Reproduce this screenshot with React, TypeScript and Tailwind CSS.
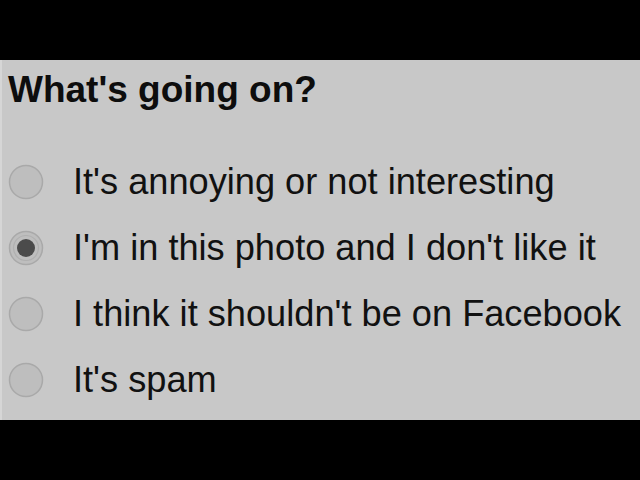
import React from "react";

const options = [
  { label: "It's annoying or not interesting", checked: false },
  { label: "I'm in this photo and I don't like it", checked: true },
  { label: "I think it shouldn't be on Facebook", checked: false },
  { label: "It's spam", checked: false },
];

function Radio({ checked }: { checked: boolean }) {
  return (
    <svg width="36" height="36" viewBox="0 0 36 36" className="shrink-0">
      <circle cx="18" cy="18" r="16.5" fill="#bebebe" stroke="#a9a9a9" strokeWidth="1.5" />
      {checked && (
        <>
          <circle cx="18" cy="18" r="12.5" fill="none" stroke="#b0b0b0" strokeWidth="1.2" />
          <circle cx="18" cy="18" r="9" fill="#4b4b4b" />
        </>
      )}
    </svg>
  );
}

export default function App() {
  return (
    <div className="w-[640px] h-[480px] bg-black flex flex-col" style={{ fontFamily: '"Liberation Sans", Arial, sans-serif' }}>
      <div className="h-[60px]" />
      <div className="h-[360px] bg-[#c8c8c8] border-l-2 border-[#d6d6d6] flex flex-col pt-[8px]">
        <h1 className="text-[37px] leading-[44px] font-bold text-[#0d0d0d] pl-[6px]">What's going on?</h1>
        <div className="mt-[37px] flex flex-col">
          {options.map((o) => (
            <label key={o.label} className="h-[66px] flex items-center">
              <div className="pl-[6px] w-[71px]">
                <Radio checked={o.checked} />
              </div>
              <span className="text-[36.2px] leading-[66px] text-[#111] whitespace-nowrap">{o.label}</span>
            </label>
          ))}
        </div>
      </div>
      <div className="h-[60px]" />
    </div>
  );
}
